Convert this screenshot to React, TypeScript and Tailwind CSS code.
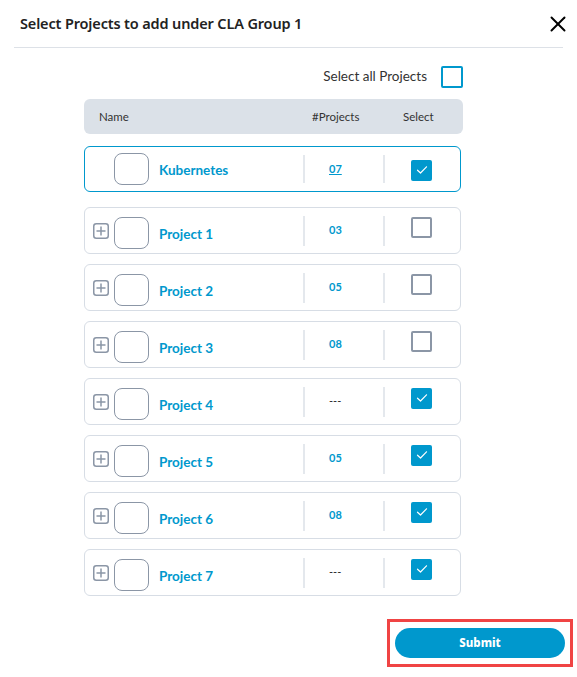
import { X } from 'lucide-react';

type Row = { name: string; count: string; checked: boolean };

const rows: Row[] = [
  { name: 'Project 1', count: '03', checked: false },
  { name: 'Project 2', count: '05', checked: false },
  { name: 'Project 3', count: '08', checked: false },
  { name: 'Project 4', count: '---', checked: true },
  { name: 'Project 5', count: '05', checked: true },
  { name: 'Project 6', count: '08', checked: true },
  { name: 'Project 7', count: '---', checked: true },
];

function Checkbox({ checked }: { checked: boolean }) {
  if (checked) {
    return (
      <div className="w-[21px] h-[21px] rounded-[2px] bg-[#0098cd] flex items-center justify-center">
        <svg width="12" height="10" viewBox="0 0 12 10" fill="none">
          <path d="M1.5 5.2 L4.5 8 L10.5 1.8" stroke="white" strokeWidth="1.2" strokeLinecap="round" strokeLinejoin="round" />
        </svg>
      </div>
    );
  }
  return <div className="w-[21px] h-[21px] rounded-[2px] border-2 border-[#8b96a6] bg-white" />;
}

function PlusBox() {
  return (
    <svg width="16" height="16" viewBox="0 0 16 16" fill="none">
      <rect x="0.75" y="0.75" width="14.5" height="14.5" rx="2.5" stroke="#8b96a6" strokeWidth="1.5" />
      <path d="M8 3.5 V12.5 M3.5 8 H12.5" stroke="#8b96a6" strokeWidth="1.5" />
    </svg>
  );
}

function LogoBox() {
  return <div className="w-[35px] h-[32px] rounded-[8px] border border-[#8b96a6] bg-white shrink-0" />;
}

export default function App() {
  return (
    <div className="w-[577px] h-[677px] bg-white relative" style={{ fontFamily: '"Noto Sans", "Open Sans", sans-serif' }}>
      {/* Header */}
      <div className="h-[48px] mx-[14px] border-b border-[#dde1e7] flex items-center justify-between pl-[6px]">
        <h2 className="text-[14.5px] font-semibold text-[#222] tracking-[-0.15px]">Select Projects to add under CLA Group 1</h2>
        <X className="w-[26px] h-[26px] text-black -mr-[8px]" strokeWidth={1.8} />
      </div>

      {/* Body */}
      <div className="ml-[84px] w-[379px]" style={{ fontFamily: 'Lato, "Noto Sans", sans-serif' }}>
        <div className="flex items-center justify-end mt-[18px] h-[21px]">
          <span className="text-[13.5px] text-[#333] mr-[14px]">Select all Projects</span>
          <div className="w-[22px] h-[22px] border-2 border-[#0098cd] rounded-[2px]" />
        </div>

        <div className="mt-[12px] h-[35px] bg-[#dbe1e8] rounded-[6px] flex items-center text-[11.5px] text-[#333]">
          <div className="w-[219px] pl-[15px]">Name</div>
          <div className="w-[80px] pl-[9px]">#Projects</div>
          <div className="flex-1 pl-[20px]">Select</div>
        </div>

        {/* Kubernetes */}
        <div className="mt-[12px] h-[46px] w-[377px] border border-[#0098cd] rounded-[6px] flex items-center">
          <div className="w-[218px] flex items-center pl-[29px]">
            <LogoBox />
            <span className="ml-[10px] mt-[2px] text-[13.5px] font-bold text-[#0098cd]">Kubernetes</span>
          </div>
          <div className="w-[80px] h-[28px] border-l-2 border-[#e4e8ed] flex items-center pl-[24px]">
            <span className="text-[11px] font-bold text-[#0098cd] underline">07</span>
          </div>
          <div className="flex-1 h-[28px] border-l-2 border-[#e4e8ed] flex items-center pl-[26px] pt-[2px]">
            <Checkbox checked />
          </div>
        </div>

        <div className="mt-[15px] flex flex-col gap-[10px]">
          {rows.map((r) => (
            <div key={r.name} className="h-[47px] w-[377px] border border-[#d7dde5] rounded-[6px] flex items-center">
              <div className="w-[218px] flex items-center pl-[8px]">
                <PlusBox />
                <div className="ml-[5px] mt-[4px]">
                  <LogoBox />
                </div>
                <span className="ml-[10px] mt-[7px] text-[13.5px] font-bold text-[#0098cd]">{r.name}</span>
              </div>
              <div className="w-[80px] h-[30px] border-l-2 border-[#e4e8ed] flex items-center pl-[24px]">
                <span className={r.count === '---' ? 'text-[11px] text-[#222]' : 'text-[11px] font-bold text-[#0098cd]'}>{r.count}</span>
              </div>
              <div className="flex-1 h-[30px] border-l-2 border-[#e4e8ed] flex items-start pl-[26px] pt-[1px]">
                <Checkbox checked={r.checked} />
              </div>
            </div>
          ))}
        </div>
      </div>

      {/* Footer */}
      <div className="absolute left-[387px] top-[619px] w-[186px] h-[48px] border-[3px] border-[#f04444] flex items-center justify-center">
        <button className="w-[170px] h-[30px] rounded-full bg-[#0098cd] text-white text-[11.5px] font-extrabold">Submit</button>
      </div>
    </div>
  );
}
